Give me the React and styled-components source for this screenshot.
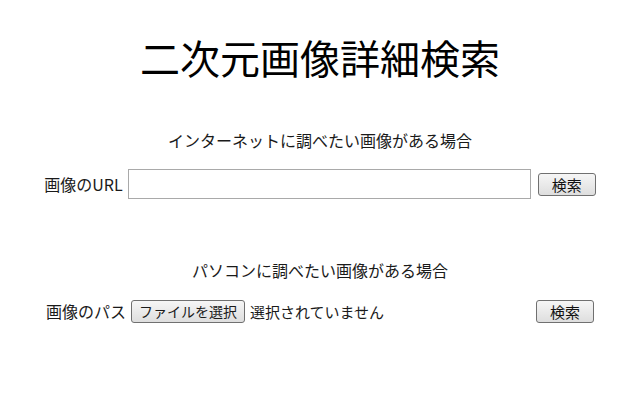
import React from "react";
import styled, { createGlobalStyle } from "styled-components";

const GlobalStyle = createGlobalStyle`
  body {
    margin: 0;
    background: #ffffff;
    color: #1a1a1a;
    font-family: "Noto Sans CJK JP", "Noto Sans", "Liberation Sans", sans-serif;
  }
`;

const App = () => {
  return (
    <>
      <GlobalStyle />
      <Page>
        <Title>二次元画像詳細検索</Title>

        <Section>
          <Heading>インターネットに調べたい画像がある場合</Heading>
          <Row>
            <Label>画像のURL</Label>
            <UrlInput type="text" />
            <Button>検索</Button>
          </Row>
        </Section>

        <Section $top={59}>
          <Heading>パソコンに調べたい画像がある場合</Heading>
          <Row>
            <Label>画像のパス</Label>
            <FileField>
              <FileButton>ファイルを選択</FileButton>
              <FileStatus>選択されていません</FileStatus>
            </FileField>
            <Button>検索</Button>
          </Row>
        </Section>
      </Page>
    </>
  );
};

export default App;

const Page = styled.div`
  width: 640px;
  display: flex;
  flex-direction: column;
  align-items: center;
`;

const Title = styled.h1`
  margin: 33px 0 0;
  font-size: 40px;
  font-weight: 400;
  line-height: 48px;
  color: #000;
`;

const Section = styled.section`
  margin-top: ${(p) => p.$top || 47}px;
  display: flex;
  flex-direction: column;
  align-items: center;
  gap: 17px;
`;

const Heading = styled.p`
  margin: 0;
  font-size: 16px;
  line-height: 24px;
`;

const Row = styled.div`
  display: flex;
  align-items: center;
  gap: 5px;
  font-size: 16px;
`;

const Label = styled.span`
  white-space: nowrap;
`;

const UrlInput = styled.input`
  box-sizing: border-box;
  width: 403px;
  height: 30px;
  margin: 0 2px 0 0;
  border: 1px solid #a9a9a9;
  background: #fff;
  padding: 0 4px;
  outline: none;
`;

const Button = styled.button`
  box-sizing: border-box;
  height: 23px;
  width: 58px;
  padding: 0;
  border: 1px solid #707070;
  border-radius: 3px;
  background: linear-gradient(#f6f6f6, #dedede);
  font-family: inherit;
  font-size: 15px;
  line-height: 21px;
  color: #111;
`;

const FileField = styled.div`
  width: 400px;
  display: flex;
  align-items: center;
  gap: 5px;
`;

const FileButton = styled.span`
  box-sizing: border-box;
  height: 23px;
  padding: 0 7px;
  border: 1px solid #707070;
  border-radius: 3px;
  background: linear-gradient(#f6f6f6, #dedede);
  font-size: 14px;
  line-height: 21px;
  white-space: nowrap;
`;

const FileStatus = styled.span`
  font-size: 15px;
  white-space: nowrap;
`;
